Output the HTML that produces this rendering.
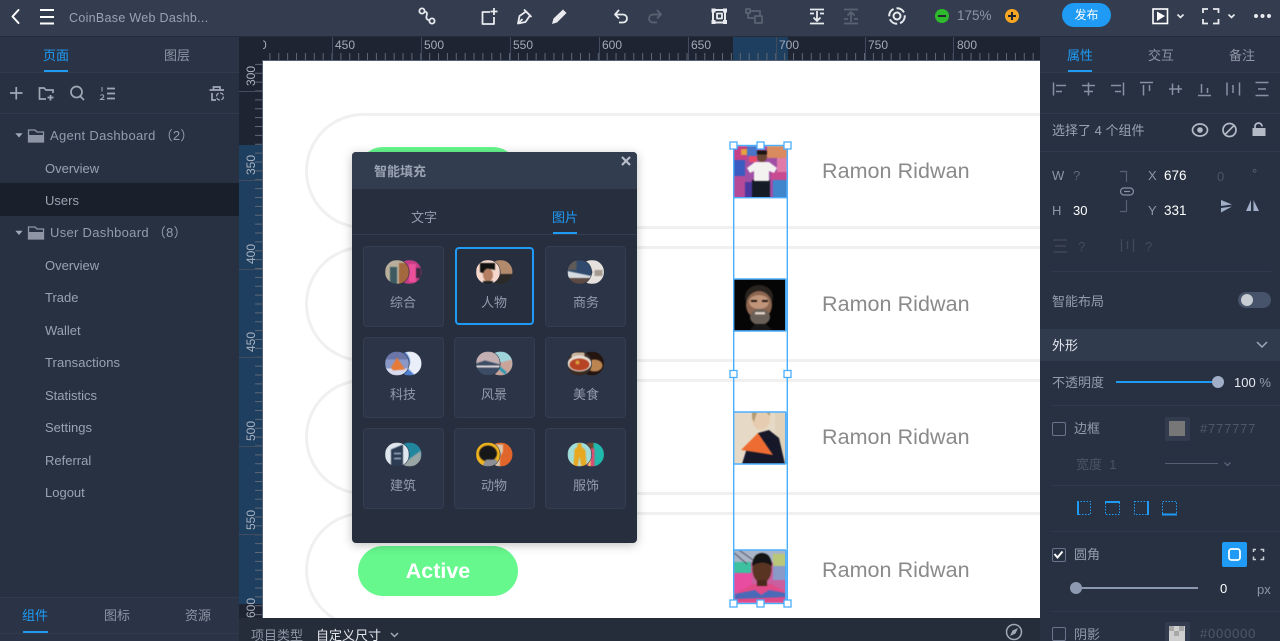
<!DOCTYPE html>
<html><head><meta charset="utf-8"><style>
html,body{margin:0;padding:0;background:#272f3f}
#r{position:relative;width:1280px;height:641px;overflow:hidden;background:#283142;font-family:"Liberation Sans","Noto Sans CJK SC",sans-serif;font-size:13px;color:#9aa3b2}
.a{position:absolute}
.t{position:absolute;white-space:nowrap;line-height:16px}
.c{transform:translateX(-50%)}
.nm{position:absolute;left:822px;font-size:21.5px;line-height:28px;color:#8a8a8a;white-space:nowrap;letter-spacing:.05px}
.card{position:absolute;width:79px;height:79px;background:#2c3547;border:1px solid #343e51;border-radius:4px}
.cl{position:absolute;font-size:13px;color:#939cac;line-height:16px;white-space:nowrap;transform:translateX(-50%)}
.rv{position:absolute;left:239px;width:24px;height:20px;line-height:20px;text-align:center;color:#aab2c0;font-size:12px}
.rv span{display:block;transform:rotate(-90deg)}
.rh{position:absolute;top:38px;font-size:12px;line-height:15px;color:#a3abb9}
.ln{position:absolute;height:1px;background:#323b4d}
.ph{filter:blur(.5px)}
svg g[clip-path]{filter:blur(.4px)}
</style></head><body><div id="r">

<!-- top bar -->
<div class="a" style="left:0;top:0;width:1280px;height:36px;background:#333d4f"></div>
<div class="a" style="left:0;top:36px;width:1280px;height:1px;background:#252c3a"></div>
<div class="t" style="left:69px;top:10px;font-size:12.5px;color:#9aa3b2;letter-spacing:.3px">CoinBase Web Dashb...</div>
<div class="t" style="left:957px;top:8px;font-size:13.5px;color:#8e96a5">175%</div>
<div class="a" style="left:1062px;top:3px;width:49px;height:24px;border-radius:12px;background:#1f9bf5;color:#fff;text-align:center;line-height:25px;font-size:12px">发布</div>

<!-- left panel -->
<div class="a" style="left:0;top:37px;width:239px;height:604px;background:#283142"></div>
<div class="a" style="left:0;top:37px;width:239px;height:35px;background:#2b3446"></div>
<div class="ln" style="left:0;top:72px;width:239px"></div>
<div class="ln" style="left:0;top:113px;width:239px"></div>
<div class="t c" style="left:56px;top:48px;color:#1f9bf5">页面</div>
<div class="t c" style="left:177px;top:48px;color:#8e96a5">图层</div>
<div class="a" style="left:44px;top:70px;width:24px;height:2px;background:#1f9bf5"></div>
<div class="a" style="left:0;top:183px;width:239px;height:33px;background:#1a202b"></div>
<div class="t" style="left:50px;top:128px;letter-spacing:.3px;color:#939cac">Agent Dashboard （2）</div>
<div class="t" style="left:45px;top:161px">Overview</div>
<div class="t" style="left:45px;top:193px">Users</div>
<div class="t" style="left:50px;top:225px;letter-spacing:.3px;color:#939cac">User Dashboard （8）</div>
<div class="t" style="left:45px;top:258px">Overview</div>
<div class="t" style="left:45px;top:290px">Trade</div>
<div class="t" style="left:45px;top:323px">Wallet</div>
<div class="t" style="left:45px;top:355px;letter-spacing:.1px">Transactions</div>
<div class="t" style="left:45px;top:388px">Statistics</div>
<div class="t" style="left:45px;top:420px">Settings</div>
<div class="t" style="left:45px;top:453px">Referral</div>
<div class="t" style="left:45px;top:485px">Logout</div>
<div class="a" style="left:0;top:597px;width:239px;height:44px;background:#2b3446"></div>
<div class="ln" style="left:0;top:597px;width:239px"></div>
<div class="ln" style="left:0;top:633px;width:239px"></div>
<div class="t c" style="left:35px;top:608px;color:#1f9bf5">组件</div>
<div class="t c" style="left:117px;top:608px;color:#8e96a5">图标</div>
<div class="t c" style="left:198px;top:608px;color:#8e96a5">资源</div>
<div class="a" style="left:23px;top:631px;width:25px;height:2px;background:#1f9bf5"></div>

<!-- rulers -->
<div class="a" style="left:239px;top:37px;width:801px;height:23px;background:#1e2431"></div>
<div class="a" style="left:239px;top:60px;width:24px;height:558px;background:#1e2431"></div>
<div class="a" style="left:733px;top:37px;width:55px;height:23px;background:#1e3f5f"></div>
<div class="a" style="left:239px;top:145px;width:24px;height:459px;background:#1e3f5f"></div>
<div class="rh" style="left:263px;width:4px;overflow:hidden"><span style="margin-left:-3px">0</span></div>
<div class="rh" style="left:335px">450</div>
<div class="rh" style="left:424px">500</div>
<div class="rh" style="left:513px">550</div>
<div class="rh" style="left:602px">600</div>
<div class="rh" style="left:691px">650</div>
<div class="rh" style="left:779px">700</div>
<div class="rh" style="left:868px">750</div>
<div class="rh" style="left:957px">800</div>
<div class="rv" style="top:66px"><span>300</span></div>
<div class="rv" style="top:155px"><span>350</span></div>
<div class="rv" style="top:244px"><span>400</span></div>
<div class="rv" style="top:332px"><span>450</span></div>
<div class="rv" style="top:421px"><span>500</span></div>
<div class="rv" style="top:510px"><span>550</span></div>
<div class="rv" style="top:598px"><span>600</span></div>

<!-- canvas -->
<div class="a" style="left:263px;top:60px;width:777px;height:558px;background:#fff;overflow:hidden">
  <div class="a" style="left:42px;top:53px;width:900px;height:110px;border:3px solid #f0f0f0;border-radius:58px"></div>
  <div class="a" style="left:42px;top:186px;width:900px;height:110px;border:3px solid #f0f0f0;border-radius:58px"></div>
  <div class="a" style="left:42px;top:319px;width:900px;height:110px;border:3px solid #f0f0f0;border-radius:58px"></div>
  <div class="a" style="left:42px;top:452px;width:900px;height:110px;border:3px solid #f0f0f0;border-radius:58px"></div>
  <div class="a" style="left:95px;top:87px;width:160px;height:50px;border-radius:25px;background:#66f78d"></div>
  <div class="a" style="left:95px;top:486px;width:160px;height:50px;border-radius:25px;background:#66f78d;color:#fff;font-weight:bold;font-size:21.5px;line-height:50px;text-align:center">Active</div>
</div>
<div class="nm" style="top:157px">Ramon Ridwan</div>
<div class="nm" style="top:290px">Ramon Ridwan</div>
<div class="nm" style="top:423px">Ramon Ridwan</div>
<div class="nm" style="top:556px">Ramon Ridwan</div>

<!-- photos -->
<div class="a" style="left:733px;top:146px;width:54px;height:52px;overflow:hidden">
<svg class="ph" width="54" height="52" viewBox="0 0 54 52" style="display:block">
 <rect width="54" height="52" fill="#a04fa4"/><rect x="0" y="0" width="14" height="14" fill="#c73f86"/><rect x="14" y="0" width="10" height="10" fill="#4a74c8"/><rect x="34" y="0" width="20" height="12" fill="#d98a5e"/><rect x="0" y="14" width="12" height="16" fill="#3a5cc0"/><rect x="0" y="30" width="12" height="22" fill="#b54a98"/><rect x="12" y="36" width="8" height="16" fill="#4a3aa0"/><rect x="44" y="12" width="10" height="14" fill="#e07aa8"/><rect x="40" y="34" width="14" height="18" fill="#3f86cc"/><rect x="8" y="3" width="6" height="6" fill="#e8a040"/><rect x="38" y="26" width="16" height="8" fill="#c84a90"/><rect x="16" y="10" width="8" height="6" fill="#e84a6a"/>
 <rect x="19" y="34" width="18" height="18" fill="#161b28"/><path d="M14 22 22 16H36L44 22 41 27 36 25V35H21V25L17 27Z" fill="#f4f2f0"/><circle cx="29" cy="11" r="5" fill="#6a4632"/><rect x="24" y="4.500" width="10" height="4" fill="#1a1614"/>
</svg></div>
<div class="a" style="left:733px;top:279px;width:53px;height:52px;overflow:hidden">
<svg class="ph" width="53" height="52" viewBox="0 0 53 52" style="display:block">
 <rect width="53" height="52" fill="#050505"/><ellipse cx="26" cy="18" rx="14" ry="12" fill="#2a2420"/><ellipse cx="26" cy="26" rx="13" ry="14" fill="#8c6650"/><ellipse cx="26" cy="23" rx="10" ry="7" fill="#c0957a"/><ellipse cx="27" cy="38" rx="10" ry="8" fill="#6a6058"/><rect x="18" y="21" width="6" height="2" fill="#2a1a14"/><rect x="29" y="21" width="6" height="2" fill="#2a1a14"/><rect x="22" y="33" width="10" height="2.500" fill="#e0d2c4"/><path d="M16 52 22 45H33L40 52Z" fill="#181818"/>
</svg></div>
<div class="a" style="left:733px;top:412px;width:53px;height:52px;overflow:hidden">
<svg class="ph" width="53" height="52" viewBox="0 0 53 52" style="display:block">
 <rect width="53" height="52" fill="#e6dac6"/><rect x="42" width="11" height="52" fill="#e0d2ba"/><ellipse cx="28" cy="7" rx="9" ry="11" fill="#e6ccb0"/><path d="M19 0H37V4L33 0H24L21 10 19 6Z" fill="#b39c72"/><path d="M9 52 14 36 25 21 36 18 46 26 52 52Z" fill="#16182a"/><path d="M8 38 25 21 40 43Z" fill="#ee6c32"/>
</svg></div>
<div class="a" style="left:733px;top:550px;width:53px;height:53px;overflow:hidden">
<svg class="ph" width="53" height="53" viewBox="0 0 53 53" style="display:block">
 <rect width="53" height="53" fill="#c95f9f"/><rect width="53" height="12" fill="#a9b4c6"/><rect x="0" y="12" width="18" height="11" fill="#3cc0a0"/><rect x="40" y="4" width="13" height="12" fill="#b8c878"/><rect x="40" y="16" width="13" height="14" fill="#8a9ac8"/><rect x="0" y="23" width="19" height="19" fill="#e84ca0"/><path d="M0 2 14 14M6 0 20 10" stroke="#556" stroke-width="1"/>
 <path d="M1 53 4 43 20 34H38L50 40 53 53Z" fill="#e04a88"/><path d="M2 44 22 40 28 45 36 40 52 43 52 47 2 49Z" fill="#4a6ab8"/><ellipse cx="29" cy="19" rx="9.500" ry="14" fill="#5a3422"/><path d="M19 16Q20 3 29 3T39 16Q29 9 19 16Z" fill="#141414"/><rect x="24" y="30" width="10" height="6" fill="#4a2a1c"/>
</svg></div>

<!-- dialog -->
<div class="a" style="left:352px;top:152px;width:285px;height:391px;background:#272f3f;border-radius:4px;box-shadow:0 2px 10px rgba(0,0,0,.25)"></div>
<div class="a" style="left:352px;top:152px;width:285px;height:37px;background:#333d50;border-radius:4px 4px 0 0"></div>
<div class="t" style="left:374px;top:164px;color:#9aa3b2;font-weight:bold;font-size:13px">智能填充</div>
<div class="t c" style="left:424px;top:210px;color:#939cac">文字</div>
<div class="t c" style="left:565px;top:210px;color:#1f9bf5">图片</div>
<div class="a" style="left:352px;top:234px;width:285px;height:1px;background:#343e51"></div>
<div class="a" style="left:553px;top:232px;width:24px;height:2px;background:#1f9bf5"></div>
<div class="card" style="left:363px;top:246px"></div>
<div class="card" style="left:455px;top:247px;width:75px;height:74px;border:2px solid #1f9bf5;background:#272f3f"></div>
<div class="card" style="left:545px;top:246px"></div>
<div class="card" style="left:363px;top:337px"></div>
<div class="card" style="left:454px;top:337px"></div>
<div class="card" style="left:545px;top:337px"></div>
<div class="card" style="left:363px;top:428px"></div>
<div class="card" style="left:454px;top:428px"></div>
<div class="card" style="left:545px;top:428px"></div>
<div class="cl" style="left:403px;top:295px">综合</div><div class="cl" style="left:494px;top:295px">人物</div><div class="cl" style="left:586px;top:295px">商务</div>
<div class="cl" style="left:403px;top:387px">科技</div><div class="cl" style="left:494px;top:387px">风景</div><div class="cl" style="left:586px;top:387px">美食</div>
<div class="cl" style="left:403px;top:478px">建筑</div><div class="cl" style="left:494px;top:478px">动物</div><div class="cl" style="left:586px;top:478px">服饰</div>

<!-- right panel -->
<div class="a" style="left:1040px;top:37px;width:240px;height:604px;background:#283142"></div>
<div class="a" style="left:1040px;top:37px;width:240px;height:35px;background:#2b3446"></div>
<div class="ln" style="left:1040px;top:72px;width:240px"></div>
<div class="ln" style="left:1040px;top:113px;width:240px"></div>
<div class="ln" style="left:1040px;top:151px;width:240px"></div>
<div class="ln" style="left:1051px;top:271px;width:220px"></div>
<div class="ln" style="left:1051px;top:405px;width:229px"></div>
<div class="ln" style="left:1051px;top:485px;width:229px"></div>
<div class="ln" style="left:1051px;top:531px;width:229px"></div>
<div class="ln" style="left:1051px;top:611px;width:229px"></div>
<div class="t c" style="left:1080px;top:48px;color:#1f9bf5">属性</div>
<div class="t c" style="left:1161px;top:48px;color:#8e96a5">交互</div>
<div class="t c" style="left:1242px;top:48px;color:#8e96a5">备注</div>
<div class="a" style="left:1068px;top:70px;width:24px;height:2px;background:#1f9bf5"></div>
<div class="t" style="left:1052px;top:123px;color:#9aa3b2">选择了 4 个组件</div>
<div class="t" style="left:1052px;top:168px;color:#8e96a5">W</div><div class="t" style="left:1073px;top:168px;color:#5f6878">?</div>
<div class="t" style="left:1052px;top:203px;color:#8e96a5">H</div><div class="t" style="left:1073px;top:203px;color:#fff">30</div>
<div class="t" style="left:1148px;top:168px;color:#8e96a5">X</div><div class="t" style="left:1164px;top:168px;color:#fff;font-size:13.5px">676</div>
<div class="t" style="left:1148px;top:203px;color:#8e96a5">Y</div><div class="t" style="left:1164px;top:203px;color:#fff;font-size:13.5px">331</div>
<div class="t" style="left:1217px;top:169px;color:#4a5364">0</div><div class="t" style="left:1252px;top:166px;color:#5f6878">°</div>
<div class="t" style="left:1078px;top:239px;color:#434c5d">?</div><div class="t" style="left:1145px;top:239px;color:#434c5d">?</div>
<div class="t" style="left:1052px;top:294px;color:#939cac">智能布局</div>
<div class="a" style="left:1238px;top:292px;width:33px;height:16px;border-radius:8px;background:#47536a"></div>
<div class="a" style="left:1241px;top:294px;width:12px;height:12px;border-radius:6px;background:#c8ccd3"></div>
<div class="a" style="left:1040px;top:329px;width:240px;height:32px;background:#313b4e"></div>
<div class="t" style="left:1052px;top:338px;color:#e6e9ee">外形</div>
<div class="t" style="left:1052px;top:375px;color:#939cac">不透明度</div>
<div class="a" style="left:1116px;top:381px;width:102px;height:2px;background:#1f9bf5"></div>
<div class="a" style="left:1212px;top:376px;width:12px;height:12px;border-radius:6px;background:#a0aec8"></div>
<div class="t" style="left:1234px;top:375px;color:#e6e9ee">100 <span style="color:#939cac">%</span></div>
<div class="a" style="left:1052px;top:422px;width:12px;height:12px;border:1px solid #69738a;border-radius:2px"></div>
<div class="t" style="left:1074px;top:421px;color:#939cac">边框</div>
<div class="a" style="left:1165px;top:417px;width:25px;height:24px;background:#333c4e;border-radius:2px"></div>
<div class="a" style="left:1169px;top:421px;width:16px;height:15px;background:#777"></div>
<div class="t" style="left:1200px;top:421px;color:#4f5868;letter-spacing:.8px">#777777</div>
<div class="t" style="left:1076px;top:457px;color:#4a5364">宽度&nbsp; 1</div>
<div class="a" style="left:1165px;top:463px;width:53px;height:1px;background:#566074"></div>
<div class="a" style="left:1052px;top:548px;width:12px;height:12px;border:1px solid #69738a;border-radius:2px"></div>
<div class="t" style="left:1074px;top:547px;color:#939cac">圆角</div>
<div class="a" style="left:1222px;top:542px;width:25px;height:25px;background:#1f9bf5;border-radius:2px"></div>
<div class="a" style="left:1076px;top:587px;width:122px;height:2px;background:#8c99b0"></div>
<div class="a" style="left:1070px;top:582px;width:12px;height:12px;border-radius:6px;background:#8c99b0"></div>
<div class="t" style="left:1220px;top:581px;color:#fff">0</div>
<div class="t" style="left:1257px;top:582px;color:#8e96a5">px</div>
<div class="a" style="left:1052px;top:627px;width:12px;height:12px;border:1px solid #69738a;border-radius:2px"></div>
<div class="t" style="left:1074px;top:627px;color:#939cac">阴影</div>
<div class="a" style="left:1165px;top:622px;width:25px;height:19px;background:#333c4e"></div>
<div class="a" style="left:1169px;top:626px;width:16px;height:15px;background:#cfcfcf"></div>
<div class="t" style="left:1200px;top:626px;color:#4f5868;letter-spacing:.8px">#000000</div>

<!-- bottom bar -->
<div class="a" style="left:239px;top:618px;width:801px;height:23px;background:#252c3a"></div>
<div class="t" style="left:251px;top:628px;color:#8e96a5">项目类型</div>
<div class="t" style="left:316px;top:628px;color:#e6e9ee">自定义尺寸</div>

<!-- icon overlay -->
<svg class="a" style="left:0;top:0" width="1280" height="641" viewBox="0 0 1280 641" fill="none">
<defs>
 <clipPath id="c1"><circle r="12"/></clipPath><clipPath id="c2"><circle cx="12.5" r="12"/></clipPath>
</defs>
<!-- rulers -->
<line x1="269.4" y1="56.500" x2="1040" y2="56.500" stroke="#5f6878" stroke-width="7" stroke-dasharray="1 7.875"/>
<line x1="259" y1="63.900" x2="259" y2="618" stroke="#5f6878" stroke-width="8" stroke-dasharray="1 7.875"/>
<g fill="#434c5e"><rect x="332" y="37" width="1" height="23"/><rect x="421" y="37" width="1" height="23"/><rect x="510" y="37" width="1" height="23"/><rect x="599" y="37" width="1" height="23"/><rect x="688" y="37" width="1" height="23"/><rect x="776" y="37" width="1" height="23"/><rect x="865" y="37" width="1" height="23"/><rect x="953" y="37" width="1" height="23"/>
<rect x="239" y="91" width="24" height="1"/><rect x="239" y="180" width="24" height="1"/><rect x="239" y="269" width="24" height="1"/><rect x="239" y="357" width="24" height="1"/><rect x="239" y="446" width="24" height="1"/><rect x="239" y="534" width="24" height="1"/></g>
<g fill="#566074"><rect x="263" y="60" width="777" height="1"/><rect x="262" y="60" width="1" height="558"/></g>
<!-- selection -->
<g stroke="#4aaeff" stroke-width="1.400">
 <rect x="733.700" y="145.500" width="53.600" height="458"/>
 <path d="M733.700 197.700H787M733.700 279H786M733.700 331H786M733.700 412H786M733.700 464H786M733.700 550H786"/>
 <path d="M785.800 279V331M785.800 412V464M785.800 550V603"/>
</g>
<g fill="#fff" stroke="#4aaeff" stroke-width="1.300"><rect x="730" y="142" width="7" height="7"/><rect x="757" y="142" width="7" height="7"/><rect x="784" y="142" width="7" height="7"/><rect x="730" y="370.500" width="7" height="7"/><rect x="784" y="370.500" width="7" height="7"/><rect x="730" y="600" width="7" height="7"/><rect x="757" y="600" width="7" height="7"/><rect x="784" y="600" width="7" height="7"/></g>
<!-- topbar icons -->
<g stroke="#fff" stroke-width="2" stroke-linecap="round" stroke-linejoin="round">
 <path d="M18.500 10 12.500 16.500 18.500 23"/>
 <path d="M40 10H54M40 17H54M40 23.500H54" stroke-linecap="butt"/>
</g>
<g stroke="#e8eaee" stroke-width="1.800" stroke-linejoin="round">
 <circle cx="422" cy="11" r="2.600"/><circle cx="432" cy="21" r="2.600"/><path d="M424.500 11.500C431 13 422 18 429.500 20.500"/>
 <path d="M490 12H482.500V24H494V17"/><path d="M494 8V15M490.500 11.500H497.500"/>
 <path d="M518 23.500 519.500 16 526 11.500 530 15.500 525.500 22Z"/><path d="M518 23.500 522.500 19"/><path d="M524 9.500 531.500 17"/>
 <path d="M619 10 615 14.500 619 18.500M615.500 14.500H623A4 4 0 0 1 623 22.500H619"/>
 <rect x="713" y="10" width="12" height="12.500" stroke-width="2"/><rect x="717" y="13.500" width="5" height="5"/>
 <path d="M810 9.500H824M810 23.500H824M810 13.500H814M820 13.500H824M817 11V20M813.500 17.500 817 21 820.500 17.500"/>
 <circle cx="897" cy="16" r="7.800" stroke-width="2" stroke-dasharray="9 3"/><circle cx="897" cy="16" r="3.500" stroke-width="2"/>
</g>
<g fill="#e8eaee"><rect x="711.500" y="8.500" width="4" height="4"/><rect x="723" y="8.500" width="4" height="4"/><rect x="711.500" y="20" width="4" height="4"/><rect x="723" y="20" width="4" height="4"/>
 <path d="M552 24 553.500 18.500 563 9.500 566.500 13 557 22.500Z"/></g>
<g stroke="#5a6372" stroke-width="1.700" stroke-linejoin="round">
 <path d="M657 10 661 14.500 657 18.500M660.500 14.500H653A4 4 0 0 0 653 22.500H657"/>
 <rect x="746" y="9" width="4" height="4"/><rect x="755" y="16" width="7" height="7"/><path d="M748 13V18H755M750 11H760V16"/>
 <path d="M844 9.500H858M844 23.500H858M844 19H848M854 19H858M851 22V13M847.500 15.500 851 12 854.500 15.500"/>
</g>
<circle cx="942" cy="16" r="7" fill="#2dbb2d"/><path d="M938 16H946" stroke="#20252e" stroke-width="2"/>
<circle cx="1012" cy="16" r="7" fill="#f5a623"/><path d="M1008 16H1016M1012 12V20" stroke="#20252e" stroke-width="2"/>
<rect x="1153" y="9" width="14.500" height="14.500" stroke="#fff" stroke-width="1.600"/><path d="M1157 11.500 1165 16 1157 21Z" fill="#fff"/>
<path d="M1177.500 14.500 1180.500 17.500 1183.500 14.500M1228.500 14.500 1231.500 17.500 1234.500 14.500" stroke="#e8eaee" stroke-width="1.600"/>
<path d="M1203 13V9H1208M1213 9H1218.500V13M1218.500 19V23.500H1213M1208 23.500H1203V19" stroke="#e8eaee" stroke-width="1.800"/>
<circle cx="1256" cy="16" r="2" fill="#e8eaee"/><circle cx="1262.500" cy="16" r="2" fill="#e8eaee"/><circle cx="1269" cy="16" r="2" fill="#e8eaee"/>
<!-- left panel tools -->
<g stroke="#a0a8b6" stroke-width="1.700">
 <path d="M10 93H22.500M16.250 87V99.500"/>
 <path d="M46 99H39.500V88H44L46 90H53V93"/><path d="M50.500 95V100.500M47.500 97.500H53.500"/>
 <circle cx="76.500" cy="92" r="5.500"/><path d="M80.500 96.500 84 100"/>
 <path d="M107 88.500H115M107 93.500H115M107 98.500H115"/>
 <path d="M102 87V91.500M100.500 95.500C102 94 104.500 95 103.500 97L100.500 99.500H104.500" stroke-width="1"/>
 <path d="M209.500 90H224M213.500 90V87H220V90M212 93V100H216"/><circle cx="220" cy="96.500" r="3.500" stroke-width="1.300" stroke-dasharray="4 1.500"/>
</g>
<path d="M16 133.500 19 137 22 133.500ZM16 231 19 234.500 22 231Z" fill="#a0a8b6" stroke="#a0a8b6" stroke-width=".6"/>
<path d="M28.500 142V130H35L37 132H43.500V142Z" fill="none" stroke="#8e96a5" stroke-width="1.300"/><path d="M28.500 142V135H43.500V142Z" fill="#8e96a5"/>
<path d="M28.500 239V227H35L37 229H43.500V239Z" fill="none" stroke="#8e96a5" stroke-width="1.300"/><path d="M28.500 239V232H43.500V239Z" fill="#8e96a5"/>
<!-- align icons -->
<g stroke="#8791a3" stroke-width="1.500">
 <path d="M1053.500 82.500V95.500M1056 85.500H1066M1056 91.500H1062"/>
 <path d="M1088.500 82.500V95.500M1082 85.500H1095M1084 91.500H1093"/>
 <path d="M1123.500 82.500V95.500M1111 85.500H1121M1115 91.500H1121"/>
 <path d="M1140 82.500H1153M1143.500 85V95.500M1149.500 85V91"/>
 <path d="M1169 89H1182M1172.500 83.500V95M1178.500 85V93"/>
 <path d="M1198 95.500H1211M1201.500 84V93M1207.500 88V93"/>
 <path d="M1227 82.500V95.500M1239.500 82.500V95.500M1233 85V93"/>
 <path d="M1255.500 82.500H1268.500M1255.500 95.500H1268.500M1258 89H1266"/>
</g>
<!-- eye etc -->
<g stroke="#b4bac6" stroke-width="1.700">
 <ellipse cx="1200" cy="130" rx="7.500" ry="6"/><circle cx="1200" cy="130" r="2.800" fill="#b4bac6" stroke="none"/>
 <circle cx="1229.500" cy="130" r="6.500"/><path d="M1225 134.500 1234 125.500"/>
 <path d="M1255 128V126.500A3.500 3.500 0 0 1 1262 126.500"/>
</g>
<rect x="1252.500" y="128" width="13" height="8" fill="#b4bac6"/>
<!-- link -->
<path d="M1120 171.500H1126.500V182M1126.500 200V211.500H1120" stroke="#566074" stroke-width="1.200"/>
<g stroke="#8791a3" stroke-width="1.200"><rect x="1120.500" y="188" width="13" height="7" rx="3.500"/><path d="M1124 191.500H1130"/></g>
<path d="M1221 200 1232 204.500 1221 206ZM1221 208 1232 206.500 1221 212.500Z" fill="#a0aec8"/>
<path d="M1251 200V211H1246ZM1253.500 200V211H1259Z" fill="#a0aec8"/>
<g stroke="#414a5b" stroke-width="1.200"><path d="M1053.500 240H1067M1055 246H1066M1053.500 252H1067M1121.500 239V252M1133.500 239V252M1127.500 241V249"/></g>
<path d="M1257 342 1262 347 1267 342" stroke="#a0a8b6" stroke-width="1.500"/>
<path d="M1224.500 462.500 1227.500 465.500 1230.500 462.500" stroke="#566074" stroke-width="1.500"/>
<path d="M391 633 394.500 636.500 398 633" stroke="#a0a8b6" stroke-width="1.500"/>
<g stroke="#1f9bf5" stroke-width="1"><rect x="1077.500" y="501.500" width="13" height="13" stroke-dasharray="1.500 1.500"/><rect x="1105.500" y="501.500" width="14" height="13" stroke-dasharray="1.500 1.500"/><rect x="1134.500" y="501.500" width="13" height="13" stroke-dasharray="1.500 1.500"/><rect x="1162.500" y="501.500" width="14" height="13" stroke-dasharray="1.500 1.500"/></g>
<g stroke="#1f9bf5" stroke-width="2"><path d="M1078 501V515M1105 502H1120M1148 501V515M1162 514.500H1177"/></g>
<path d="M1054.500 554 1057.500 557.500 1062.500 551.500" stroke="#fff" stroke-width="2"/>
<rect x="1229" y="549" width="11" height="11" rx="2.500" stroke="#fff" stroke-width="1.800"/>
<path d="M1253.500 552V549.500H1256M1260.500 549.500H1263.500V552M1263.500 556.500V559.500H1260.500M1256 559.500H1253.500V556.500" stroke="#c8ccd3" stroke-width="1.500"/>
<g fill="#a8a8a8"><rect x="1169" y="626" width="5" height="5"/><rect x="1179" y="626" width="5" height="5"/><rect x="1174" y="631" width="5" height="5"/></g>
<circle cx="1014" cy="632" r="7.500" stroke="#a0a8b6" stroke-width="1.500"/><path d="M1018 628 1015.500 633.500 1010 636 1012.500 630.500Z" fill="#a0a8b6"/>
<path d="M622 157 630 165M630 157 622 165" stroke="#b8bec9" stroke-width="2.200"/>
<!-- thumbs -->
<g transform="translate(397,272)"><g clip-path="url(#c2)"><rect x="0" y="-12" width="25" height="24" fill="#c23d86"/><rect x="12" y="-8" width="7" height="18" fill="#ea4f9a"/><rect x="19" y="-4" width="5" height="10" fill="#3b2a42"/></g><circle r="12.500" fill="#272f3f"/><g clip-path="url(#c1)"><rect x="-12" y="-12" width="24" height="24" fill="#b7ae9c"/><rect x="2" y="-9" width="10" height="21" fill="#a5673d"/><rect x="-7" y="-5" width="7" height="17" fill="#3d5a60"/></g></g>
<g transform="translate(488,272)"><g clip-path="url(#c2)"><rect x="0" y="-12" width="25" height="24" fill="#b28a6c"/><rect x="3" y="2" width="22" height="10" fill="#2b2a28"/></g><circle r="12.500" fill="#272f3f"/><g clip-path="url(#c1)"><rect x="-12" y="-12" width="24" height="24" fill="#f6d8cc"/><path d="M-8-9H7V-2L3-3-3 2-8 0Z" fill="#111"/><ellipse cx="0" cy="3" rx="5" ry="6.500" fill="#b47f62"/><rect x="-5" y="9" width="10" height="3" fill="#222"/></g></g>
<g transform="translate(579.500,272)"><g clip-path="url(#c2)"><rect x="0" y="-12" width="25" height="24" fill="#e6e1dc"/><path d="M4-12 13 0 6 12H0V-12Z" fill="#3a3f4c"/><rect x="15" y="-2" width="8" height="6" fill="#a49a90"/></g><circle r="12.500" fill="#272f3f"/><g clip-path="url(#c1)"><rect x="-12" y="-12" width="24" height="24" fill="#2f4a6c"/><path d="M-12-1 12 4V12H-12Z" fill="#d8dce2"/><rect x="-12" y="6" width="24" height="6" fill="#5c4a44"/><rect x="-12" y="-12" width="9" height="10" fill="#5d5a58"/></g></g>
<g transform="translate(397,363.500)"><g clip-path="url(#c2)"><rect x="0" y="-12" width="25" height="24" fill="#e9eef8"/><path d="M8-12Q17-2 10 4L18 12H3V-12Z" fill="#4f7fd0"/></g><circle r="12.500" fill="#272f3f"/><g clip-path="url(#c1)"><rect x="-12" y="-12" width="24" height="24" fill="#8a98c8"/><rect x="-12" y="-12" width="24" height="8" fill="#6a76a8"/><rect x="-12" y="5" width="24" height="7" fill="#d8dcf0"/><path d="M-6 4 0-6 4 0 8 6-4 7Z" fill="#e67a3a"/></g></g>
<g transform="translate(488,363.500)"><g clip-path="url(#c2)"><rect x="0" y="-12" width="25" height="24" fill="#9fd4da"/><path d="M2 2 24-4V12H2Z" fill="#c9a49a"/><path d="M4-2 18 10" stroke="#2a9ab4" stroke-width="3"/></g><circle r="12.500" fill="#272f3f"/><g clip-path="url(#c1)"><rect x="-12" y="-12" width="24" height="24" fill="#c4b0b2"/><path d="M-12 0-3-3 12 1V12H-12Z" fill="#3c4c64"/><path d="M-12 2H12V4H-12Z" fill="#e0d8d8"/></g></g>
<g transform="translate(579.500,363.500)"><g clip-path="url(#c2)"><rect x="0" y="-12" width="25" height="24" fill="#241510"/><ellipse cx="15" cy="2" rx="8" ry="6" fill="#bb8552"/></g><circle r="12.500" fill="#272f3f"/><g clip-path="url(#c1)"><rect x="-12" y="-12" width="24" height="24" fill="#3a2a20"/><rect x="-8" y="-11" width="13" height="5" fill="#c8b4a0"/><ellipse cx="0" cy="0" rx="12" ry="8" fill="#e6ddd2"/><ellipse cx="0" cy="1" rx="10" ry="6" fill="#b64324"/><circle cx="-2" cy="-1" r="2" fill="#d8a040"/></g></g>
<g transform="translate(397,454.500)"><g clip-path="url(#c2)"><rect x="0" y="-12" width="25" height="24" fill="#22869f"/><path d="M2 12 24-4V12Z" fill="#9aa5a5"/></g><circle r="12.500" fill="#272f3f"/><g clip-path="url(#c1)"><rect x="-12" y="-12" width="24" height="24" fill="#dfe6ee"/><path d="M-6 12V-5L6-10V12Z" fill="#2c3c52"/><path d="M-3-1H4M-3 4H4" stroke="#9fb2c8" stroke-width="1.500"/></g></g>
<g transform="translate(488,454.500)"><g clip-path="url(#c2)"><rect x="0" y="-12" width="25" height="24" fill="#e0652a"/><path d="M6-10H15V-3L12 3V12H3V0Z" fill="#d9c3aa"/></g><circle r="12.500" fill="#272f3f"/><g clip-path="url(#c1)"><rect x="-12" y="-12" width="24" height="24" fill="#f0b41e"/><ellipse cx="0" cy="-1" rx="9" ry="8" fill="#17171a"/><path d="M-6 12-2 5 9 5 9 12Z" fill="#8c8f94"/></g></g>
<g transform="translate(579.500,454.500)"><g clip-path="url(#c2)"><rect x="0" y="-12" width="25" height="24" fill="#20b9ac"/><rect x="5" y="-12" width="9" height="6" fill="#6d4630"/><path d="M3-6H15V12H3Z" fill="#d94f73"/><path d="M6-5V12" stroke="#4f8ed8" stroke-width="2"/><path d="M10-5V12" stroke="#f0d060" stroke-width="2"/></g><circle r="12.500" fill="#272f3f"/><g clip-path="url(#c1)"><rect x="-12" y="-12" width="24" height="24" fill="#a0dcd8"/><rect x="-12" y="7" width="24" height="5" fill="#c2d8c0"/><path d="M-6 12-5-5-2-8V-11H2V-8L6-4 7 12 2 12 0 2-2 12Z" fill="#e8a820"/></g></g>
</svg>
</div></body></html>
